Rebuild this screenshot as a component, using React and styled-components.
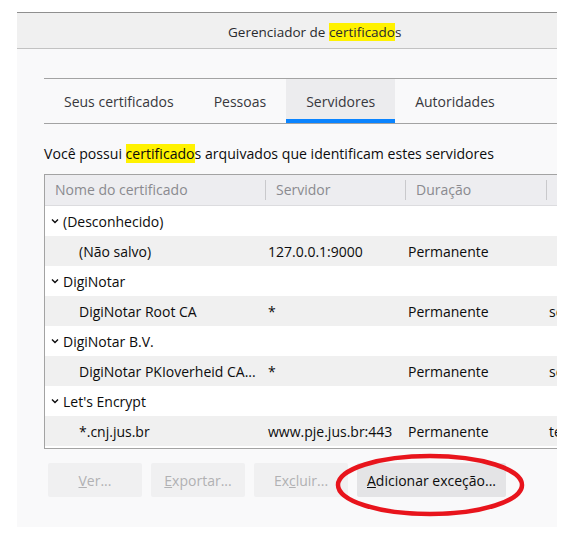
import React from 'react';
import styled, { createGlobalStyle } from 'styled-components';

const Global = createGlobalStyle`
  html, body { margin: 0; padding: 0; background: #ffffff; }
  body { font-family: "Open Sans", "Noto Sans", sans-serif; font-size: 14px; color: #0c0c0d; }
`;

const Page = styled.div`
  width: 572px;
  height: 540px;
  padding: 12px 0 0 17px;
  box-sizing: border-box;
`;

const Window = styled.div`
  position: relative;
  width: 540px;
  height: 515px;
  overflow: hidden;
  display: flex;
  flex-direction: column;
  background: #f9f9fa;
`;

const TitleBar = styled.div`
  height: 33px;
  flex: none;
  border-top: 1px solid #8f8f8f;
  border-bottom: 1px solid #c2c2c2;
  background: #f0f0f0;
  display: flex;
  align-items: center;
  padding-left: 211px;
  padding-top: 2px;
  box-sizing: content-box;
  color: #2a2a2e;
  font-size: 13.5px;
`;

const Mark = styled.span`
  background: #fff200;
`;

const Body = styled.div`
  flex: 1;
  width: 720px;
  padding: 29px 0 0 27px;
  display: flex;
  flex-direction: column;
`;

const Tabs = styled.div`
  display: flex;
  border-top: 1px solid #a3a3a3;
  border-bottom: 1px solid #a3a3a3;
`;

const Tab = styled.div`
  height: 44px;
  padding: 0 20px;
  display: flex;
  align-items: center;
  font-size: 14px;
  color: #38383d;
  background: ${p => (p.$active ? '#ececee' : 'transparent')};
  box-shadow: ${p => (p.$active ? 'inset 0 -4px 0 #0a84ff' : 'none')};
`;

const Description = styled.p`
  margin: 20px 0 0;
  line-height: 20px;
  font-size: 14.1px;
  color: #0c0c0d;
`;

const Table = styled.div`
  margin-top: 10px;
  border: 1px solid #a3a3a3;
  border-right: none;
  background: #ffffff;
  padding-bottom: 2px;
`;

const cols = '220px 140px 141px 220px';

const HeaderRow = styled.div`
  display: grid;
  grid-template-columns: ${cols};
  align-items: center;
  height: 30px;
  background: #ededf0;
  border-bottom: 1px solid #dcdcdf;
`;

const HeaderCell = styled.div`
  height: 20px;
  line-height: 20px;
  padding-left: 10px;
  border-left: ${p => (p.$first ? 'none' : '1px solid #c9c9cc')};
  color: #8a8a8f;
  font-size: 14px;
  white-space: nowrap;
`;

const Row = styled.div`
  display: grid;
  grid-template-columns: ${cols};
  align-items: center;
  height: 30px;
  background: ${p => (p.$child ? '#f0f0f0' : '#ffffff')};
`;

const Cell = styled.div`
  padding-left: 3px;
  white-space: nowrap;
  overflow: hidden;
  font-size: 14px;
`;

const NameCell = styled.div`
  display: flex;
  align-items: center;
  padding-left: ${p => (p.$child ? '34px' : '6px')};
  white-space: nowrap;
  font-size: 14px;
`;

const Twisty = styled.svg`
  width: 8px;
  height: 6px;
  margin-right: 4px;
  flex: none;
`;

const Buttons = styled.div`
  display: flex;
  gap: 9px;
  padding-left: 4px;
  margin-top: 14px;
`;

const Button = styled.div`
  min-width: 94px;
  height: 34px;
  padding: 0 10px;
  box-sizing: border-box;
  display: flex;
  align-items: center;
  justify-content: center;
  border-radius: 2px;
  font-size: 14px;
  background: ${p => (p.$disabled ? '#f0f0f1' : '#e4e4e6')};
  color: ${p => (p.$disabled ? '#b1b1b3' : '#0c0c0d')};
`;

const Circle = styled.svg`
  position: absolute;
  left: 317px;
  top: 440px;
  width: 192px;
  height: 66px;
  pointer-events: none;
`;

const Chevron = () => (
  <Twisty viewBox="0 0 8 6">
    <path d="M1 1.5 L4 4.5 L7 1.5" fill="none" stroke="#0c0c0d" strokeWidth="1.4" />
  </Twisty>
);

const groups = [
  { name: '(Desconhecido)', child: '(Não salvo)', server: '127.0.0.1:9000', exp: '' },
  { name: 'DigiNotar', child: 'DigiNotar Root CA', server: '*', exp: 'segunda-feira' },
  { name: 'DigiNotar B.V.', child: 'DigiNotar PKIoverheid CA...', server: '*', exp: 'segunda-feira' },
  { name: "Let's Encrypt", child: '*.cnj.jus.br', server: 'www.pje.jus.br:443', exp: 'terça-feira' },
];

export default function App() {
  return (
    <Page>
      <Global />
      <Window>
        <TitleBar>
          <span>Gerenciador de <Mark>certificado</Mark>s</span>
        </TitleBar>
        <Body>
          <Tabs>
            <Tab>Seus certificados</Tab>
            <Tab>Pessoas</Tab>
            <Tab $active>Servidores</Tab>
            <Tab>Autoridades</Tab>
          </Tabs>
          <Description>
            Você possui <Mark>certificado</Mark>s arquivados que identificam estes servidores
          </Description>
          <Table>
            <HeaderRow>
              <HeaderCell $first>Nome do certificado</HeaderCell>
              <HeaderCell>Servidor</HeaderCell>
              <HeaderCell>Duração</HeaderCell>
              <HeaderCell>Expira em</HeaderCell>
            </HeaderRow>
            {groups.map(g => (
              <React.Fragment key={g.name}>
                <Row>
                  <NameCell><Chevron />{g.name}</NameCell>
                </Row>
                <Row $child>
                  <NameCell $child>{g.child}</NameCell>
                  <Cell>{g.server}</Cell>
                  <Cell>Permanente</Cell>
                  <Cell>{g.exp}</Cell>
                </Row>
              </React.Fragment>
            ))}
          </Table>
          <Buttons>
            <Button $disabled><u>V</u>er...</Button>
            <Button $disabled><u>E</u>xportar...</Button>
            <Button $disabled>Ex<u>c</u>luir...</Button>
            <Button><u>A</u>dicionar exceção...</Button>
          </Buttons>
        </Body>
        <Circle viewBox="0 0 192 66">
          <ellipse cx="96" cy="33" rx="92" ry="29" fill="none" stroke="#e8141c" strokeWidth="4.5" />
        </Circle>
      </Window>
    </Page>
  );
}
